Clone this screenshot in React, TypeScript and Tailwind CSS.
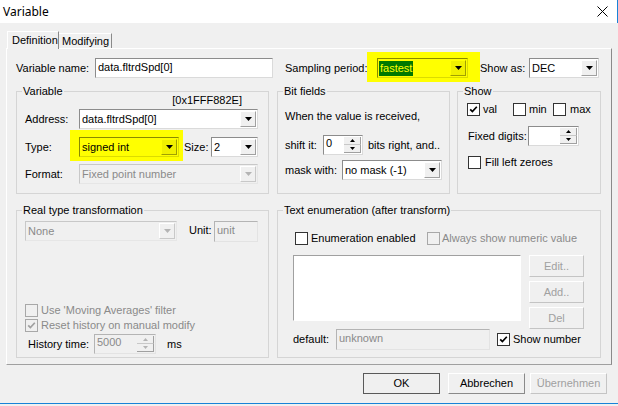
import React from "react";

const F = "font-['Liberation_Sans',Arial,sans-serif] text-[11px] leading-[13px]";

function Arrow({ color = "#000" }: { color?: string }) {
  return (
    <svg width="7" height="4" viewBox="0 0 7 4">
      <path d="M0 0H7L3.5 4Z" fill={color} />
    </svg>
  );
}

function Combo({
  className = "",
  text = "",
  disabled = false,
  yellow = false,
  selected = false,
}: {
  className?: string;
  text?: string;
  disabled?: boolean;
  yellow?: boolean;
  selected?: boolean;
}) {
  const field = yellow
    ? "bg-[#ffff00] border-[#8a8a00] border-r-[#dcdc00] border-b-[#dcdc00]"
    : disabled
    ? "bg-[#f0f0f0] border-[#c8c8c8] border-r-[#e6e6e6] border-b-[#e6e6e6]"
    : "bg-white border-[#8c8c8c] border-r-[#dadada] border-b-[#dadada]";
  const btn = yellow
    ? "bg-[#f0f000] border-r-[#a0a000] border-b-[#a0a000] border-t-[#ffff00] border-l-[#ffff00]"
    : disabled
    ? "bg-[#f0f0f0] border-r-[#c8c8c8] border-b-[#c8c8c8] border-t-white border-l-white"
    : "bg-[#f0f0f0] border-r-[#a0a0a0] border-b-[#a0a0a0] border-t-white border-l-white";
  return (
    <div className={`flex h-[20px] border ${field} ${className}`}>
      <div
        className={`flex-1 flex items-center pl-[1px] overflow-hidden whitespace-nowrap ${
          disabled ? "text-[#8a8a8a]" : "text-black"
        }`}
      >
        {selected ? (
          <span className="bg-[#007800] text-[#ffff00] px-[1px] h-[15px] flex items-center">{text}</span>
        ) : (
          <span className="pl-[1px]">{text}</span>
        )}
      </div>
      <div className={`w-[16px] my-[1px] mr-[1px] flex items-center justify-center border ${btn}`}>
        <Arrow color={disabled ? "#b4b4b4" : "#000"} />
      </div>
    </div>
  );
}

function Edit({
  className = "",
  text = "",
  disabled = false,
}: {
  className?: string;
  text?: string;
  disabled?: boolean;
}) {
  return (
    <div
      className={`flex items-start pt-[2px] pl-[2px] border whitespace-nowrap overflow-hidden ${
        disabled
          ? "bg-[#f0f0f0] text-[#8a8a8a] border-[#b4b4b4] border-r-[#e3e3e3] border-b-[#e3e3e3]"
          : "bg-white text-black border-[#8c8c8c] border-r-[#dadada] border-b-[#dadada]"
      } ${className}`}
    >
      {text}
    </div>
  );
}

function SpinArrow({ up, color }: { up?: boolean; color: string }) {
  return (
    <svg width="5" height="3" viewBox="0 0 5 3">
      <path d={up ? "M0 3H5L2.5 0Z" : "M0 0H5L2.5 3Z"} fill={color} />
    </svg>
  );
}

function Spin({
  className = "",
  text = "",
  disabled = false,
}: {
  className?: string;
  text?: string;
  disabled?: boolean;
}) {
  const c = disabled ? "#b4b4b4" : "#000";
  return (
    <div
      className={`flex h-[20px] border ${
        disabled
          ? "bg-[#f0f0f0] text-[#8a8a8a] border-[#b4b4b4] border-r-[#e3e3e3] border-b-[#e3e3e3]"
          : "bg-white text-black border-[#8c8c8c] border-r-[#dadada] border-b-[#dadada]"
      } ${className}`}
    >
      <div className="flex-1 pl-[2px] pt-[1px]">{text}</div>
      <div className="w-[17px] flex flex-col my-[1px] mr-[1px]">
        <div className="flex-1 flex items-center justify-center bg-[#f0f0f0] border-b border-r border-b-[#c8c8c8] border-r-[#a0a0a0]">
          <SpinArrow up color={c} />
        </div>
        <div className="flex-1 flex items-center justify-center bg-[#f0f0f0] border-b border-r border-b-[#a0a0a0] border-r-[#a0a0a0]">
          <SpinArrow color={c} />
        </div>
      </div>
    </div>
  );
}

function Check({ checked = false, disabled = false }: { checked?: boolean; disabled?: boolean }) {
  return (
    <div
      className={`w-[13px] h-[13px] shrink-0 border flex items-center justify-center ${
        disabled ? "border-[#a8a8a8] bg-[#f0f0f0]" : "border-[#333333] bg-white"
      }`}
    >
      {checked && (
        <svg width="9" height="9" viewBox="0 0 9 9">
          <path
            d="M1.2 4.3L3.4 6.6L7.8 1.8"
            stroke={disabled ? "#a0a0a0" : "#000"}
            strokeWidth="1.7"
            fill="none"
          />
        </svg>
      )}
    </div>
  );
}

function Btn({
  className = "",
  children,
  disabled = false,
  def = false,
}: {
  className?: string;
  children: React.ReactNode;
  disabled?: boolean;
  def?: boolean;
}) {
  const b = def
    ? "border-[#5a5a5a]"
    : disabled
    ? "border-t-white border-l-white border-r-[#c4c4c4] border-b-[#c4c4c4]"
    : "border-t-white border-l-white border-r-[#8a8a8a] border-b-[#8a8a8a]";
  return (
    <div
      className={`flex items-center justify-center border bg-[#f0f0f0] ${b} ${
        disabled ? "text-[#a0a0a0]" : "text-black"
      } ${className}`}
    >
      {children}
    </div>
  );
}

function Group({
  title,
  className = "",
  children,
}: {
  title: string;
  className?: string;
  children: React.ReactNode;
}) {
  return (
    <fieldset className={`border border-[#d5d5d5] min-w-0 p-0 m-0 shrink-0 ${className}`}>
      <legend className="ml-[5px] px-[1px] leading-[13px]">{title}</legend>
      {children}
    </fieldset>
  );
}

export default function App() {
  return (
    <div className={`w-[618px] h-[406px] bg-[#f0f0f0] flex flex-col text-black ${F}`}>
      {/* Title bar */}
      <div className="h-[23px] bg-white flex items-center justify-between border-r border-[#1883d7] shrink-0">
        <span className="pl-[3px] font-['Noto_Sans',sans-serif] text-[12px] leading-[16px]">Variable</span>
        <svg width="11" height="11" viewBox="0 0 11 11" className="mr-[9px]">
          <path d="M0.5 0.5L10.5 10.5M10.5 0.5L0.5 10.5" stroke="#000" strokeWidth="1" />
        </svg>
      </div>

      {/* Tabs */}
      <div className="mt-[8px] ml-[7px] h-[17px] flex items-start relative z-10 shrink-0">
        <div className="h-[18px] w-[52px] pl-[4px] flex items-center bg-[#f0f0f0] border-l border-t border-r border-l-white border-t-white border-r-[#8a8a8a]">
          Definition
        </div>
        <div className="mt-[2px] h-[15px] w-[53px] pl-[3px] flex items-center border-t border-r border-t-white border-r-[#8a8a8a]">
          Modifying
        </div>
      </div>

      {/* Tab page */}
      <div className="ml-[6px] w-[606px] h-[317px] shrink-0 border border-t-white border-l-white border-r-[#8a8a8a] border-b-[#a0a0a0] pl-[9px] pr-[10px] pt-[9px] flex flex-col">
        {/* Row 1 */}
        <div className="flex items-center h-[20px]">
          <span className="w-[79px]">Variable name:</span>
          <Edit className="w-[178px] h-[20px]" text="data.fltrdSpd[0]" />
          <span className="ml-[12px] w-[92px]">Sampling period:</span>
          <div className="bg-[#ffff00] -ml-[10px] pl-[10px] -mr-[12px] pr-[12px] -mt-[6px] pt-[6px] -mb-[4px] pb-[4px]">
            <Combo yellow selected className="w-[91px]" text="fastest" />
          </div>
          <span className="ml-[12px] w-[49px]">Show as:</span>
          <Combo className="w-[70px]" text="DEC" />
        </div>

        {/* Groups row 1 */}
        <div className="flex mt-[7px]">
          <Group title="Variable" className="w-[253px] h-[109px]">
            <div className="pl-[8px] flex flex-col">
              <div className="-mt-[4px] h-[13px] w-[217px] text-right">[0x1FFF882E]</div>
              <div className="mt-[2px] flex items-center h-[20px]">
                <span className="w-[54px]">Address:</span>
                <Combo className="w-[179px]" text="data.fltrdSpd[0]" />
              </div>
              <div className="mt-[8px] flex items-center h-[20px]">
                <span className="w-[54px]">Type:</span>
                <div className="bg-[#ffff00] -ml-[9px] pl-[9px] -mr-[4px] pr-[4px] -mt-[7px] pt-[7px] -mb-[4px] pb-[4px]">
                  <Combo yellow className="w-[100px]" text="signed int" />
                </div>
                <span className="ml-[5px] w-[27px]">Size:</span>
                <Combo className="w-[47px]" text="2" />
              </div>
              <div className="mt-[7px] flex items-center h-[20px]">
                <span className="w-[54px]">Format:</span>
                <Combo disabled className="w-[179px]" text="Fixed point number" />
              </div>
            </div>
          </Group>

          <Group title="Bit fields" className="ml-[8px] w-[173px] h-[109px]">
            <div className="pl-[7px] flex flex-col">
              <div className="mt-[12px] h-[13px] whitespace-nowrap">When the value is received,</div>
              <div className="mt-[12px] flex items-center h-[20px]">
                <span className="w-[38px]">shift it:</span>
                <Spin className="w-[40px]" text="0" />
                <span className="ml-[5px] whitespace-nowrap">bits right, and..</span>
              </div>
              <div className="mt-[5px] flex items-center h-[20px]">
                <span className="w-[57px]">mask with:</span>
                <Combo className="w-[100px]" text="no mask (-1)" />
              </div>
            </div>
          </Group>

          <Group title="Show" className="ml-[7px] w-[144px] h-[109px]">
            <div className="pl-[9px] flex flex-col">
              <div className="mt-[5px] h-[13px] flex items-center">
                <div className="w-[46px] flex items-center">
                  <Check checked />
                  <span className="ml-[3px]">val</span>
                </div>
                <div className="w-[40px] flex items-center">
                  <Check />
                  <span className="ml-[3px]">min</span>
                </div>
                <div className="flex items-center">
                  <Check />
                  <span className="ml-[4px]">max</span>
                </div>
              </div>
              <div className="mt-[10px] pl-[1px] flex items-center h-[20px]">
                <span className="w-[60px]">Fixed digits:</span>
                <Spin className="w-[51px]" text="" />
              </div>
              <div className="mt-[10px] pl-[1px] flex items-center h-[13px]">
                <Check />
                <span className="ml-[4px]">Fill left zeroes</span>
              </div>
            </div>
          </Group>
        </div>

        {/* Groups row 2 */}
        <div className="flex mt-[10px]">
          <Group title="Real type transformation" className="w-[253px] h-[154px]">
            <div className="pl-[8px] flex flex-col">
              <div className="mt-[4px] flex items-start h-[21px]">
                <Combo disabled className="w-[152px]" text="None" />
                <span className="ml-[12px] w-[25px] mt-[3px]">Unit:</span>
                <Edit disabled className="w-[44px] h-[21px]" text="unit" />
              </div>
              <div className="mt-[62px] h-[13px] flex items-center text-[#8a8a8a]">
                <Check disabled />
                <span className="ml-[3px]">Use 'Moving Averages' filter</span>
              </div>
              <div className="mt-[2px] h-[13px] flex items-center text-[#8a8a8a]">
                <Check disabled checked />
                <span className="ml-[3px]">Reset history on manual modify</span>
              </div>
              <div className="mt-[2px] h-[20px] flex items-center">
                <span className="ml-[3px] w-[66px]">History time:</span>
                <Spin disabled className="w-[62px]" text="5000" />
                <span className="ml-[11px]">ms</span>
              </div>
            </div>
          </Group>

          <Group title="Text enumeration (after transform)" className="ml-[8px] w-[324px] h-[154px]">
            <div className="pl-[15px] flex flex-col">
              <div className="mt-[15px] pl-[2px] h-[13px] flex items-center">
                <div className="w-[132px] flex items-center">
                  <Check />
                  <span className="ml-[3px]">Enumeration enabled</span>
                </div>
                <Check disabled />
                <span className="ml-[2px] text-[#8a8a8a]">Always show numeric value</span>
              </div>
              <div className="mt-[10px] flex items-start">
                <div className="w-[228px] h-[66px] bg-white border border-t-[#a0a0a0] border-l-[#a0a0a0] border-r-white border-b-white" />
                <div className="ml-[8px] flex flex-col gap-[4px]">
                  <Btn disabled className="w-[55px] h-[22px]">Edit..</Btn>
                  <Btn disabled className="w-[55px] h-[22px]">Add..</Btn>
                  <Btn disabled className="w-[55px] h-[22px]">Del</Btn>
                </div>
              </div>
              <div className="h-[21px] flex items-center">
                <span className="w-[43px]">default:</span>
                <Edit disabled className="w-[154px] h-[21px]" text="unknown" />
                <div className="ml-[7px]">
                  <Check checked />
                </div>
                <span className="ml-[3px]">Show number</span>
              </div>
            </div>
          </Group>
        </div>
      </div>

      {/* Bottom buttons */}
      <div className="mt-[8px] flex justify-end pr-[11px] h-[21px] shrink-0">
        <Btn def className="w-[77px] h-[21px]">OK</Btn>
        <Btn className="ml-[8px] w-[77px] h-[21px]">Abbrechen</Btn>
        <Btn disabled className="ml-[5px] w-[77px] h-[21px]">Übernehmen</Btn>
      </div>

      <div className="flex-1" />
      <div className="h-[1px] bg-[#1883d7] shrink-0" />
      <div className="h-[2px] shrink-0" />
    </div>
  );
}
